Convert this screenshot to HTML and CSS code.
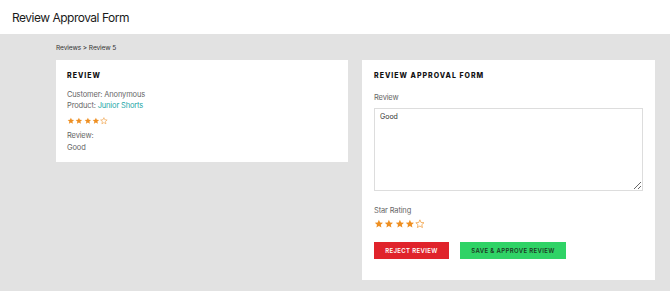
FILE: index.html
```html
<!DOCTYPE html>
<html>
<head>
<meta charset="utf-8">
<link rel="stylesheet" href="styles.css">
</head>
<body>
<header class="topbar"><h1 class="title">Review Approval Form</h1></header>
<main class="content">
  <div class="crumbs">Reviews &gt; Review 5</div>
  <div class="cards">
    <section class="card card-left">
      <h2 class="card-title">REVIEW</h2>
      <div class="line first">Customer: Anonymous</div>
      <div class="line">Product: <a class="link">Junior Shorts</a></div>
      <div class="stars small">
        <svg viewBox="0 0 24 24"><path class="on" d="M12 2l2.9 6.6 7.1.6-5.4 4.7 1.6 7-6.2-3.7-6.2 3.7 1.6-7L2 9.2l7.1-.6z"/></svg>
        <svg viewBox="0 0 24 24"><path class="on" d="M12 2l2.9 6.6 7.1.6-5.4 4.7 1.6 7-6.2-3.7-6.2 3.7 1.6-7L2 9.2l7.1-.6z"/></svg>
        <svg viewBox="0 0 24 24"><path class="on" d="M12 2l2.9 6.6 7.1.6-5.4 4.7 1.6 7-6.2-3.7-6.2 3.7 1.6-7L2 9.2l7.1-.6z"/></svg>
        <svg viewBox="0 0 24 24"><path class="on" d="M12 2l2.9 6.6 7.1.6-5.4 4.7 1.6 7-6.2-3.7-6.2 3.7 1.6-7L2 9.2l7.1-.6z"/></svg>
        <svg viewBox="0 0 24 24"><path class="off" d="M12 2l2.9 6.6 7.1.6-5.4 4.7 1.6 7-6.2-3.7-6.2 3.7 1.6-7L2 9.2l7.1-.6z"/></svg>
      </div>
      <div class="line tall">Review:</div>
      <div class="line tall">Good</div>
    </section>
    <section class="card card-right">
      <h2 class="card-title">REVIEW APPROVAL FORM</h2>
      <label class="label">Review</label>
      <textarea class="area">Good</textarea>
      <label class="label rating-label">Star Rating</label>
      <div class="stars big">
        <svg viewBox="0 0 24 24"><path class="on" d="M12 2l2.9 6.6 7.1.6-5.4 4.7 1.6 7-6.2-3.7-6.2 3.7 1.6-7L2 9.2l7.1-.6z"/></svg>
        <svg viewBox="0 0 24 24"><path class="on" d="M12 2l2.9 6.6 7.1.6-5.4 4.7 1.6 7-6.2-3.7-6.2 3.7 1.6-7L2 9.2l7.1-.6z"/></svg>
        <svg viewBox="0 0 24 24"><path class="on" d="M12 2l2.9 6.6 7.1.6-5.4 4.7 1.6 7-6.2-3.7-6.2 3.7 1.6-7L2 9.2l7.1-.6z"/></svg>
        <svg viewBox="0 0 24 24"><path class="on" d="M12 2l2.9 6.6 7.1.6-5.4 4.7 1.6 7-6.2-3.7-6.2 3.7 1.6-7L2 9.2l7.1-.6z"/></svg>
        <svg viewBox="0 0 24 24"><path class="off" d="M12 2l2.9 6.6 7.1.6-5.4 4.7 1.6 7-6.2-3.7-6.2 3.7 1.6-7L2 9.2l7.1-.6z"/></svg>
      </div>
      <div class="actions">
        <button class="btn reject">REJECT REVIEW</button>
        <button class="btn approve">SAVE &amp; APPROVE REVIEW</button>
      </div>
    </section>
  </div>
</main>
</body>
</html>
```
FILE: styles.css
```css
* { box-sizing: border-box; }
html, body { margin: 0; padding: 0; }
body {
  width: 670px;
  height: 291px;
  overflow: hidden;
  background: #e2e2e2;
  font-family: Inter, "Noto Sans", sans-serif;
  color: #555;
}
.topbar {
  height: 34px;
  background: #fff;
  display: flex;
  align-items: center;
  padding-left: 12px;
}
.title {
  margin: 0;
  font-size: 12px;
  font-weight: 400;
  color: #1a1a1a;
  letter-spacing: -0.5px;
}
.content {
  padding: 8px 15px 0 56px;
}
.crumbs {
  font-size: 6.6px;
  color: #333;
  line-height: 12px;
  height: 18px;
  letter-spacing: -0.1px;
}
.cards {
  display: flex;
  gap: 14px;
  align-items: flex-start;
}
.card {
  background: #fff;
}
.card-left {
  width: 292px;
  height: 102px;
  padding: 11px 11px 0 11px;
}
.card-right {
  width: 293px;
  height: 220px;
  padding: 11px 12px 0 12px;
  display: flex;
  flex-direction: column;
}
.card-title {
  margin: 0;
  font-size: 7px;
  font-weight: 800;
  color: #111;
  letter-spacing: 1px;
  line-height: 10px;
}
.line {
  font-size: 7.5px;
  line-height: 11px;
  color: #666;
  letter-spacing: -0.15px;
}
.line.tall { line-height: 12px; }
.line.first { margin-top: 8px; }
.link { color: #1aa6a6; }
.stars { display: flex; }
.stars svg { display: block; }
.stars .on { fill: #ee8f22; }
.stars .off { fill: none; stroke: #ee8f22; stroke-width: 1.6; }
.stars.small { gap: 0.5px; margin: 6px 0 5px; }
.stars.small svg { width: 7.8px; height: 7.8px; }
.stars.big { gap: 0.5px; margin-top: -1px; }
.stars.big svg { width: 9.8px; height: 9.8px; }
.label {
  font-size: 7.5px;
  line-height: 11px;
  color: #666;
  margin-top: 11px;
  letter-spacing: -0.15px;
}
.area {
  margin-top: 5px;
  width: 269px;
  height: 83px;
  border: 1px solid #ddd;
  padding: 3px 5px;
  font-family: Inter, sans-serif;
  font-size: 7px;
  color: #333;
  resize: vertical;
  outline: none;
}
.rating-label { margin-top: 14px; margin-bottom: 4px; }
.actions {
  display: flex;
  gap: 11px;
  margin-top: 13px;
}
.btn {
  height: 17px;
  border: none;
  padding: 0;
  font-family: Inter, sans-serif;
  font-size: 6px;
  font-weight: 600;
  letter-spacing: 0.35px;
}
.reject { width: 75px; background: #e0232b; color: #fff; }
.approve { width: 106px; background: #2fd366; color: #1d3b25; }
```
